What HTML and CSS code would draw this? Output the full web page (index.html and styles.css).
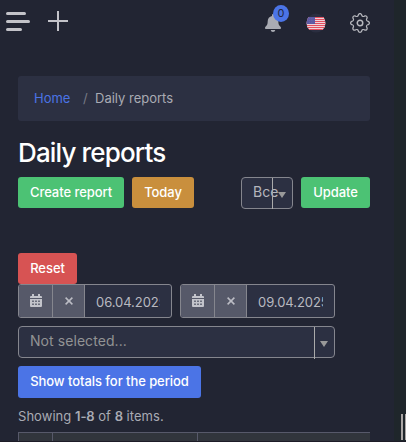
FILE: index.html
```html
<!DOCTYPE html>
<html lang="en">
<head>
<meta charset="utf-8">
<title>Daily reports</title>
<link rel="stylesheet" href="styles.css">
</head>
<body>
<div class="app">
  <div class="page">
    <header class="topbar">
      <svg class="menu" width="24" height="20" viewBox="0 0 24 20"><path d="M1.500 1.500h17M1.500 9.500h21M1.500 17.500h13" stroke="#c3c3c9" stroke-width="3" stroke-linecap="round"/></svg>
      <svg class="plus" width="20" height="20" viewBox="0 0 20 20"><path d="M0 10h20M10 0v20" stroke="#c3c3c9" stroke-width="2"/></svg>
      <div class="bell">
        <svg width="16" height="18" viewBox="0 0 16 18"><path d="M8 0a1 1 0 0 1 1 1v1c2.700.5 4.300 2.600 4.300 5.300 0 3 .8 4.200 2.200 5.500.9.900.5 2.200-.7 2.200H1.200c-1.200 0-1.600-1.300-.7-2.200 1.400-1.300 2.200-2.500 2.200-5.500C2.700 4.600 4.300 2.500 7 2V1a1 1 0 0 1 1-1zM5.800 16h4.400c0 1.200-1 2-2.200 2s-2.200-.8-2.200-2z" fill="#a9abb3"/></svg>
        <span class="badge">0</span>
      </div>
      <svg class="flag" width="20" height="20" viewBox="0 0 20 20">
        <defs><clipPath id="round"><circle cx="10" cy="10" r="9.500"/></clipPath></defs>
        <circle cx="10" cy="10" r="9.500" fill="#2b2e40"/>
        <g clip-path="url(#round)">
          <path d="M0 4h20v13H0z" fill="#f0d3d9"/>
          <path d="M0 4.500h20M0 6.500h20M0 8.500h20M0 10.500h20M0 12.500h20M0 14.500h20M0 16.500h20" stroke="#e34f5f" stroke-width="1.200"/>
          <path d="M0 4h9v7H0z" fill="#5c59a3"/>
          <path d="M1.500 5.500h7M1.500 7.500h7M1.500 9.500h7" stroke="#7f7db5" stroke-width=".5" stroke-dasharray=".7 1"/>
        </g>
      </svg>
      <svg class="gear" width="20" height="20" viewBox="0 0 16 16" fill="#b7b8be"><circle cx="8" cy="8" r="2.200" fill="none" stroke="#b7b8be" stroke-width="1.200"/><path d="M9.796 1.343c-.527-1.790-3.065-1.790-3.592 0l-.094.319a.873.873 0 0 1-1.255.520l-.292-.160c-1.640-.892-3.433.902-2.540 2.541l.159.292a.873.873 0 0 1-.520 1.255l-.319.094c-1.790.527-1.790 3.065 0 3.592l.319.094a.873.873 0 0 1 .520 1.255l-.160.292c-.892 1.640.901 3.434 2.541 2.540l.292-.159a.873.873 0 0 1 1.255.520l.094.319c.527 1.790 3.065 1.790 3.592 0l.094-.319a.873.873 0 0 1 1.255-.520l.292.160c1.640.893 3.434-.902 2.540-2.541l-.159-.292a.873.873 0 0 1 .520-1.255l.319-.094c1.790-.527 1.790-3.065 0-3.592l-.319-.094a.873.873 0 0 1-.520-1.255l.160-.292c.893-1.640-.902-3.433-2.541-2.540l-.292.159a.873.873 0 0 1-1.255-.520l-.094-.319zm-2.633.283c.246-.835 1.428-.835 1.674 0l.094.319a1.873 1.873 0 0 0 2.693 1.115l.291-.160c.764-.415 1.600.420 1.184 1.185l-.159.292a1.873 1.873 0 0 0 1.116 2.692l.318.094c.835.246.835 1.428 0 1.674l-.319.094a1.873 1.873 0 0 0-1.115 2.693l.160.291c.415.764-.420 1.600-1.185 1.184l-.291-.159a1.873 1.873 0 0 0-2.693 1.116l-.094.318c-.246.835-1.428.835-1.674 0l-.094-.319a1.873 1.873 0 0 0-2.692-1.115l-.292.160c-.764.415-1.600-.420-1.184-1.185l.159-.291A1.873 1.873 0 0 0 1.945 8.930l-.319-.094c-.835-.246-.835-1.428 0-1.674l.319-.094A1.873 1.873 0 0 0 3.060 4.377l-.160-.292c-.415-.764.420-1.600 1.185-1.184l.292.159a1.873 1.873 0 0 0 2.692-1.115l.094-.319z"/></svg>
    </header>
    <main class="content">
      <nav class="breadcrumb"><a class="home">Home</a><span class="slash">/</span><span class="current">Daily reports</span></nav>
      <h1 class="title">Daily reports</h1>
      <div class="actions">
        <button class="btn green create">Create report</button>
        <button class="btn amber">Today</button>
        <div class="select mini"><span>Все</span><i class="arrow"></i></div>
        <button class="btn green update">Update</button>
      </div>
      <button class="btn red">Reset</button>
      <div class="dates">
        <div class="date first">
          <span class="cell cal"><svg width="12" height="13" viewBox="0 0 12 13"><path d="M2 0h2v2h4V0h2v2h1a1 1 0 0 1 1 1v1H0V3a1 1 0 0 1 1-1h1zM0 5h12v7a1 1 0 0 1-1 1H1a1 1 0 0 1-1-1z" fill="#c3c4cb"/><path d="M2 6.500h2V8H2zM5 6.500h2V8H5zM8 6.500h2V8H8zM2 9.500h2V11H2zM5 9.500h2V11H5zM8 9.500h2V11H8z" fill="#6b6e7c"/></svg></span>
          <span class="cell clear"><svg width="8" height="8" viewBox="0 0 8 8"><path d="M.6.600l6.800 6.800M7.400.600L.6 7.400" stroke="#bcbdc5" stroke-width="1.500"/></svg></span>
          <span class="value"><span class="digits">06.04.2025</span></span>
        </div>
        <div class="date second">
          <span class="cell cal"><svg width="12" height="13" viewBox="0 0 12 13"><path d="M2 0h2v2h4V0h2v2h1a1 1 0 0 1 1 1v1H0V3a1 1 0 0 1 1-1h1zM0 5h12v7a1 1 0 0 1-1 1H1a1 1 0 0 1-1-1z" fill="#c3c4cb"/><path d="M2 6.500h2V8H2zM5 6.500h2V8H5zM8 6.500h2V8H8zM2 9.500h2V11H2zM5 9.500h2V11H5zM8 9.500h2V11H8z" fill="#6b6e7c"/></svg></span>
          <span class="cell clear"><svg width="8" height="8" viewBox="0 0 8 8"><path d="M.6.600l6.800 6.800M7.400.600L.6 7.400" stroke="#bcbdc5" stroke-width="1.500"/></svg></span>
          <span class="value"><span class="digits">09.04.2025</span></span>
        </div>
      </div>
      <div class="select wide"><span>Not selected...</span><i class="arrow"></i></div>
      <button class="btn blue">Show totals for the period</button>
      <p class="summary">Showing <b>1-8</b> of <b>8</b> items.</p>
      <div class="table"><span></span><span></span><span></span></div>
    </main>
  </div>
  <aside class="edge"><i class="grip"></i><i class="grip cut"></i></aside>
</div>
</body>
</html>
```
FILE: styles.css
```css
* { box-sizing: border-box; }
body { margin: 0; background: #222533; font-family: Inter, "Liberation Sans", sans-serif; font-size: 13px; color: #a9abb3; }
.app { display: flex; width: 406px; height: 442px; overflow: hidden; border-bottom: 1px solid #1d1c27; }
.page { width: 394px; }
svg { display: block; flex: none; }
.topbar { display: flex; height: 76px; padding: 11px 0 0 6px; align-items: flex-start; }
.menu { margin-top: 1px; }
.plus { margin-left: 18px; }
.bell { position: relative; width: 16px; margin: 3px 0 0 197px; }
.badge { position: absolute; left: 8px; top: -9px; width: 16px; height: 17px; border-radius: 50%; background: #4b74e6; color: #202743; font-size: 11px; line-height: 17px; text-align: center; }
.flag { margin: 2px 0 0 25px; }
.gear { margin: 2px 0 0 24px; }
.content { padding: 0 24px 0 18px; }
.breadcrumb { display: flex; height: 45px; padding: 0 16px; line-height: 45px; border-radius: 3px; background: #2c3042; }
.home { color: #4b74e6; width: 49px; }
.slash { width: 12px; color: #777a86; }
.title { margin: 14px 0 0; height: 42px; line-height: 36px; font-size: 26px; font-weight: 550; color: #fff; white-space: nowrap; letter-spacing: -.85px; }
.actions { display: flex; height: 76px; align-items: flex-start; }
.btn { display: block; height: 31px; border: 0; border-radius: 3px; padding: 0 0 1px; color: #fff; font: 500 13px/30px Inter, "Liberation Sans", sans-serif; letter-spacing: -.06px; text-align: center; white-space: nowrap; }
.green { background: #4cc274; }
.create { width: 106px; margin-right: 8px; }
.amber { width: 62px; background: #c98f3d; }
.update { width: 69px; }
.red { width: 59px; background: #d75353; }
.blue { width: 183px; height: 32px; background: #4b74e6; padding-bottom: 2px; }
.select { display: flex; justify-content: space-between; height: 32px; border: 1px solid #85868e; border-radius: 4px; background: #2c3042; font-size: 14px; line-height: 28px; padding-left: 11px; }
.arrow { display: flex; flex: none; width: 21px; height: 32px; border-left: 1px solid #aaa; padding: 14px 0 0 5px; }
.arrow::after { content: ""; width: 0; height: 0; border: 4px solid transparent; border-top: 6px solid #999; border-bottom: 0; }
.mini { width: 52px; margin: 0 8px 0 47px; }
.mini span { width: 19px; white-space: nowrap; color: #b5b6bd; }
.mini .arrow { width: 20px; height: 31px; }
.wide { width: 317px; margin: 8px 0; color: #929394; }
.wide .arrow { width: 20px; }
.wide span { letter-spacing: .07px; }
.dates { display: flex; gap: 8px; }
.date { display: flex; height: 34px; border: 1px solid #85868e; border-radius: 3px; background: #2c3042; overflow: hidden; }
.first { width: 154px; }
.second { width: 155px; }
.cell { display: flex; align-items: center; justify-content: center; flex: none; border-right: 1px solid #85868e; background: #565969; padding-bottom: 1px; }
.cal { width: 34px; }
.clear { width: 32px; }
.value { flex: 1; padding: 0 11px; min-width: 0; color: #b8b9c0; line-height: 34px; }
.digits { display: block; overflow: hidden; white-space: nowrap; letter-spacing: -.06px; }
.summary { margin: 10px 0 0; height: 24px; line-height: 17px; white-space: nowrap; letter-spacing: .04px; }
.summary b { font-weight: 600; letter-spacing: -.1px; }
.table { display: grid; grid-template-columns: 34px 145px 173px; height: 10px; border-top: 1px solid #57596a; background: #31353c; }
.table span { border-left: 1px solid #57596a; }
.edge { display: flex; width: 12px; padding: 414px 0 0 7px; gap: 2px; background: #1f262b; }
.grip { flex: none; width: 2px; height: 26px; background: #aaa6a5; }
.cut { width: 1px; }
```
